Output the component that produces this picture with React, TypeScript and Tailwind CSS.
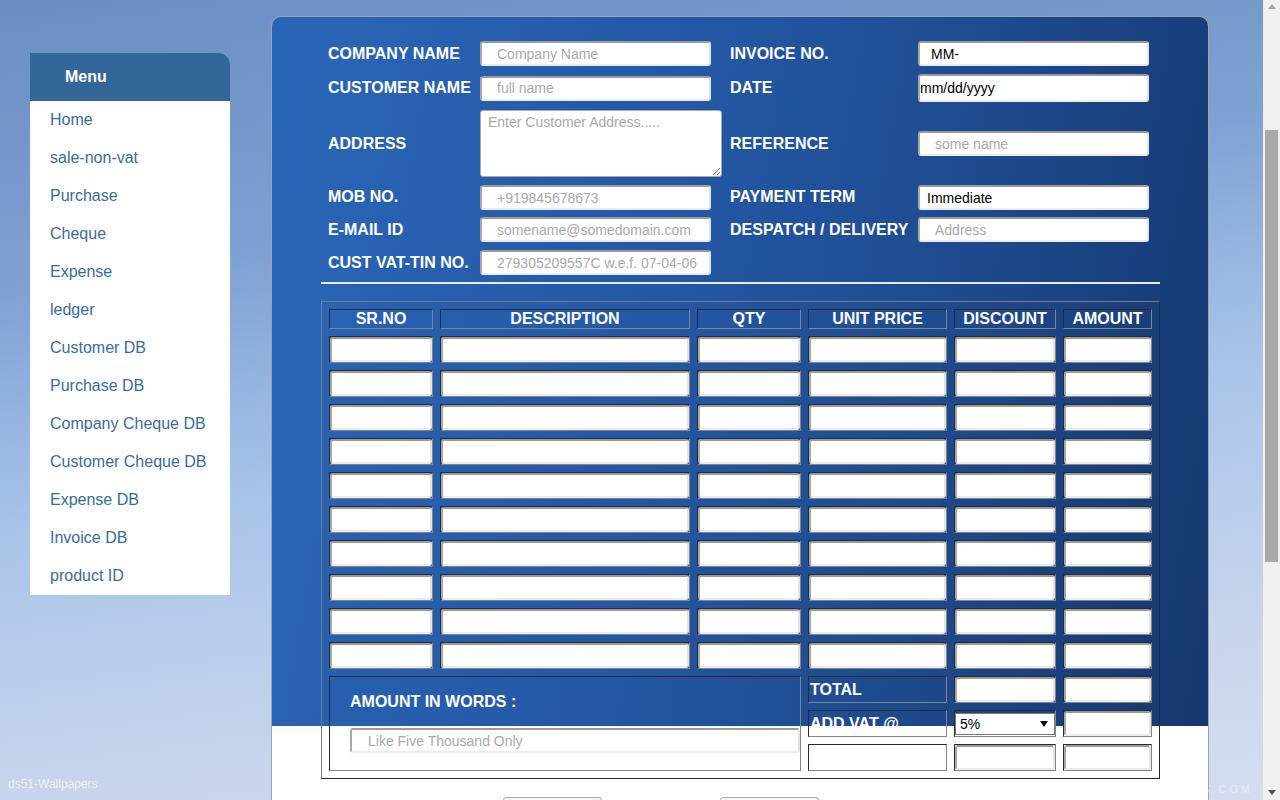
import React from "react";

const MENU = [
  "Home",
  "sale-non-vat",
  "Purchase",
  "Cheque",
  "Expense",
  "ledger",
  "Customer DB",
  "Purchase DB",
  "Company Cheque DB",
  "Customer Cheque DB",
  "Expense DB",
  "Invoice DB",
  "product ID",
];

const HEADERS = ["SR.NO", "DESCRIPTION", "QTY", "UNIT PRICE", "DISCOUNT", "AMOUNT"];

// text field look of the old page (inset grey border)
const field =
  "rounded-[3px] border-2 border-t-[#9b9b9b] border-l-[#a8a8a8] border-b-[#ececec] border-r-[#e4e4e4] bg-white text-[14px] text-black outline-none placeholder:text-[#a9a9a9]";

const cell = "border border-t-[#2b2b2b] border-l-[#2b2b2b] border-b-[#858585] border-r-[#858585]";

function Label({ children }: { children: React.ReactNode }) {
  return <div className="flex items-center text-[16px] font-bold leading-[18px] text-white whitespace-nowrap">{children}</div>;
}

function CellInput() {
  return (
    <div className={`${cell} flex`}>
      <input className={`${field} h-full w-full`} />
    </div>
  );
}

export default function App() {
  return (
    <div className="flex h-[800px] w-[1280px] overflow-hidden font-['Liberation_Sans',Arial,sans-serif]">
      {/* page */}
      <div className="relative flex flex-1 items-start bg-[linear-gradient(172deg,#6a8dc3_0%,#7fa2d4_30%,#a9c4e9_55%,#c4d2ec_78%,#d5def0_100%)]">
        {/* side menu */}
        <div className="ml-[30px] mt-[53px] w-[200px] shrink-0">
          <div className="flex h-[48px] items-center rounded-tr-[12px] bg-[#336699] pl-[35px] text-[16px] font-bold text-white">
            Menu
          </div>
          <ul className="bg-white">
            {MENU.map((m) => (
              <li key={m} className="flex h-[38px] items-center pl-[20px] text-[16px] text-[#3a6aa3]">
                {m}
              </li>
            ))}
          </ul>
        </div>

        {/* invoice panel */}
        <div className="ml-[41px] mt-[16px] w-[938px] shrink-0 rounded-t-[10px] border border-[#9aa3b0] bg-white bg-[linear-gradient(100deg,#2a66b8_0%,#2458a6_40%,#1d4a8d_70%,#15376f_100%)] bg-[length:100%_709px] bg-no-repeat pt-[24px]">
          <div className="grid grid-cols-[152px_250px_188px_231px] grid-rows-[25px_28px_67px_24px_25px_25px] gap-y-2 pl-[56px]">
            <Label>COMPANY NAME</Label>
            <input className={`${field} h-[25px] w-[231px] pl-[15px]`} placeholder="Company Name" />
            <Label>INVOICE NO.</Label>
            <input className={`${field} h-[25px] w-[231px] pl-[11px]`} defaultValue="MM-" />

            <Label>CUSTOMER NAME</Label>
            <input className={`${field} h-[25px] w-[231px] self-center pl-[15px]`} placeholder="full name" />
            <Label>DATE</Label>
            <input className={`${field} h-[28px] w-[231px] pl-0`} defaultValue="mm/dd/yyyy" />

            <Label>ADDRESS</Label>
            <textarea
              className="h-[67px] w-[242px] rounded-[3px] border border-[#a9a9a9] bg-white px-[7px] pt-[3px] text-[14px] leading-[16px] outline-none placeholder:text-[#a9a9a9]"
              placeholder="Enter Customer Address....."
            />
            <Label>REFERENCE</Label>
            <input className={`${field} h-[25px] w-[231px] self-center pl-[15px]`} placeholder="some name" />

            <Label>MOB NO.</Label>
            <input className={`${field} h-[25px] w-[231px] self-start pl-[15px]`} placeholder="+919845678673" />
            <Label>PAYMENT TERM</Label>
            <input className={`${field} h-[25px] w-[231px] self-start pl-[7px]`} defaultValue="Immediate" />

            <Label>E-MAIL ID</Label>
            <input className={`${field} h-[25px] w-[231px] pl-[15px]`} placeholder="somename@somedomain.com" />
            <Label>DESPATCH / DELIVERY</Label>
            <input className={`${field} h-[25px] w-[231px] pl-[15px]`} placeholder="Address" />

            <Label>CUST VAT-TIN NO.</Label>
            <input className={`${field} h-[25px] w-[231px] pl-[15px]`} placeholder="279305209557C w.e.f. 07-04-06" />
            <div />
            <div />
          </div>

          <div className="ml-[49px] mt-[7px] h-[2px] w-[839px] bg-[#e4e9f2]" />

          {/* items table */}
          <div className="ml-[49px] mt-[17px] grid w-[839px] grid-cols-[104px_250px_104px_139px_102px_89px] grid-rows-[20px_repeat(13,27px)] gap-[7px] border border-t-[#7b7b7b] border-l-[#7b7b7b] border-b-[#2a2a2a] border-r-[#2a2a2a] p-[7px]">
            {HEADERS.map((h) => (
              <div key={h} className={`${cell} flex items-center justify-center text-[16px] font-bold leading-[18px] text-white`}>
                {h}
              </div>
            ))}
            {Array.from({ length: 60 }).map((_, i) => (
              <CellInput key={i} />
            ))}

            <div className={`${cell} col-span-3 row-span-3 flex flex-col pl-[20px] pt-[16px]`}>
              <div className="text-[16px] font-bold leading-[18px] text-white">AMOUNT IN WORDS :</div>
              <input className={`${field} mt-[17px] h-[25px] w-full pl-[16px]`} placeholder="Like Five Thousand Only" />
            </div>

            <div className={`${cell} flex items-center pl-px text-[16px] font-bold text-white`}>TOTAL</div>
            <CellInput />
            <CellInput />

            <div className={`${cell} flex items-center pl-px text-[16px] font-bold text-white`}>ADD VAT @</div>
            <div className={`${cell} pt-[2px]`}>
              <div className="flex h-[22px] items-center justify-between border border-[#7a7a7a] bg-white pl-[4px] pr-[6px] text-[14px] text-black">
                <span>5%</span>
                <svg width="8" height="6" viewBox="0 0 8 6">
                  <path d="M0 0h8L4 6z" fill="#111" />
                </svg>
              </div>
            </div>
            <CellInput />

            <div className={cell} />
            <CellInput />
            <CellInput />
          </div>

          <div className="ml-[231px] mt-[18px] flex gap-[118px] pb-[40px]">
            <button className="h-[32px] w-[99px] rounded-[3px] border border-[#a9a9a9] bg-[linear-gradient(#f6f6f6,#dedede)]" />
            <button className="h-[32px] w-[99px] rounded-[3px] border border-[#a9a9a9] bg-[linear-gradient(#f6f6f6,#dedede)]" />
          </div>
        </div>

        <div className="absolute bottom-[7px] left-[8px] text-[12px] text-white/70">ds51-Wallpapers</div>
        <div className="absolute bottom-[3px] right-[10px] text-[11px] tracking-[3px] text-white/40">S.COM</div>
      </div>

      {/* scrollbar */}
      <div className="flex w-[17px] shrink-0 flex-col items-center bg-[#f1f1f1]">
        <svg className="mt-[4px]" width="8" height="5" viewBox="0 0 8 5">
          <path d="M0 5h8L4 0z" fill="#a3a3a3" />
        </svg>
        <div className="mt-[121px] h-[432px] w-[13px] bg-[#a8a8a8]" />
        <svg className="mt-auto mb-[5px]" width="8" height="5" viewBox="0 0 8 5">
          <path d="M0 0h8L4 5z" fill="#505050" />
        </svg>
      </div>
    </div>
  );
}
